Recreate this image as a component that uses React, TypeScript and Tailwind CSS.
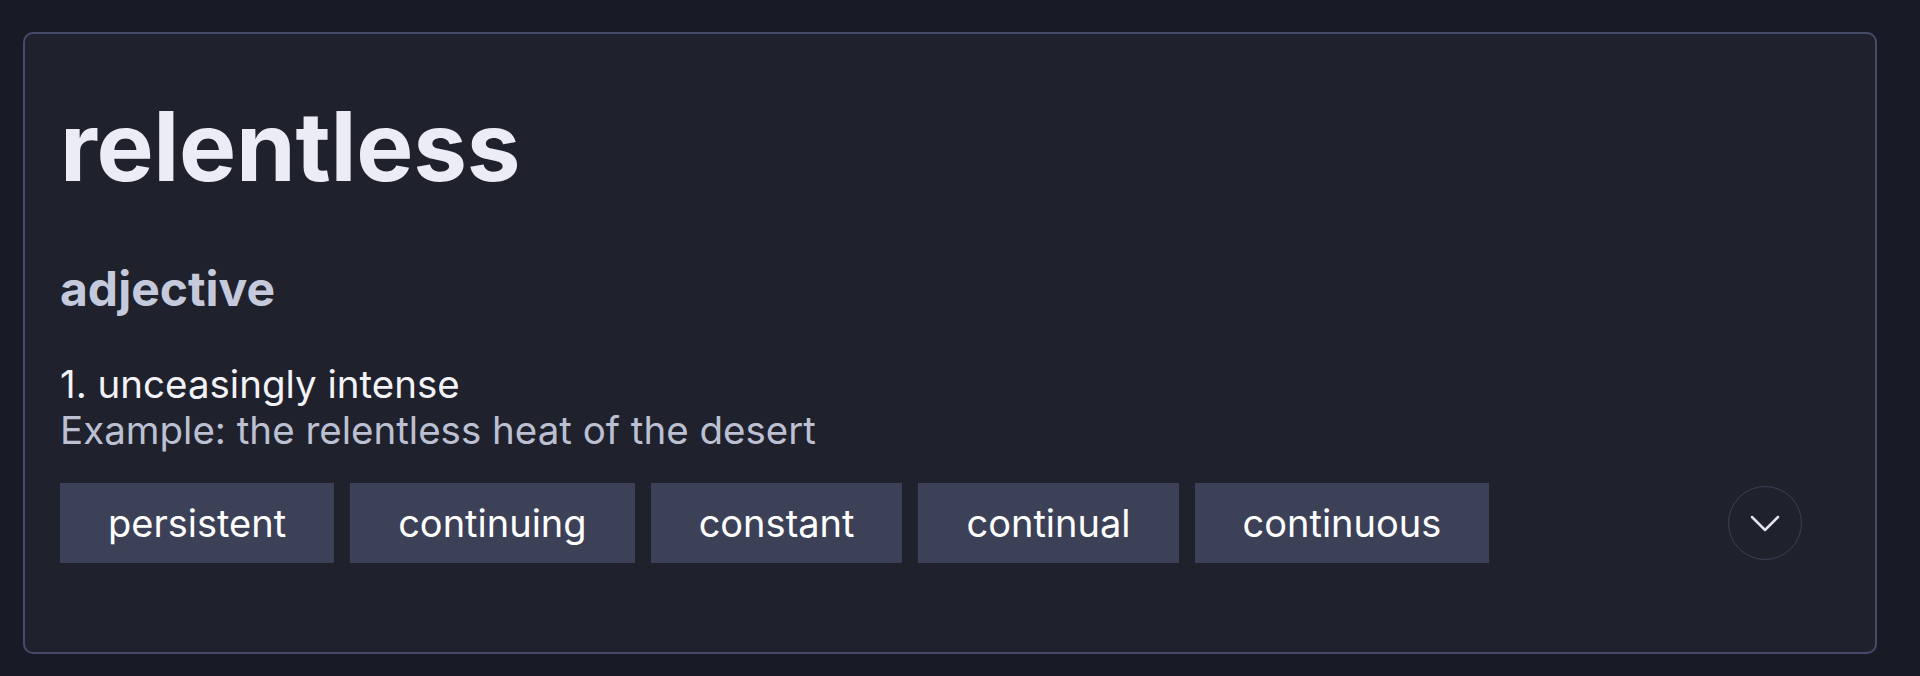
const synonyms = ["persistent", "continuing", "constant", "continual", "continuous"];

export default function App() {
  return (
    <div className="min-h-[676px] bg-[#181b25] pl-[23px] pt-8 pb-[23px] font-['Inter',sans-serif]">
      <div className="w-[1854px] h-[622px] rounded-[10px] border-2 border-[#454b68] bg-[#1f222d] px-[35px] pt-[64px]">
        <h1 className="text-[96px] font-bold leading-none tracking-[-0.003em] text-[#ececf7]">relentless</h1>

        <div className="mt-[59px] text-[48px] font-bold leading-[1.5] text-[#c5c9dc]">adjective</div>

        <div className="mt-[36px] text-[38.5px] leading-[46px]">
          <div className="text-[#f2f2f7]">1. unceasingly intense</div>
          <div className="text-[#bcc0d2]">Example: the relentless heat of the desert</div>
        </div>

        <div className="mt-[30px] flex items-center justify-between pr-[38px]">
          <div className="flex gap-4">
            {synonyms.map((s) => (
              <div key={s} className="h-20 flex items-center px-[48px] bg-[#3c4158] text-[38px] text-white">
                {s}
              </div>
            ))}
          </div>
          <button className="w-[74px] h-[74px] rounded-full border border-[#3a3f55] flex items-center justify-center">
            <svg width="30" height="17" viewBox="0 0 30 17" fill="none" stroke="#e2e3ec" strokeWidth="2.5" strokeLinecap="round" strokeLinejoin="round">
              <path d="M2 2 L15 15 L28 2" />
            </svg>
          </button>
        </div>
      </div>
    </div>
  );
}
